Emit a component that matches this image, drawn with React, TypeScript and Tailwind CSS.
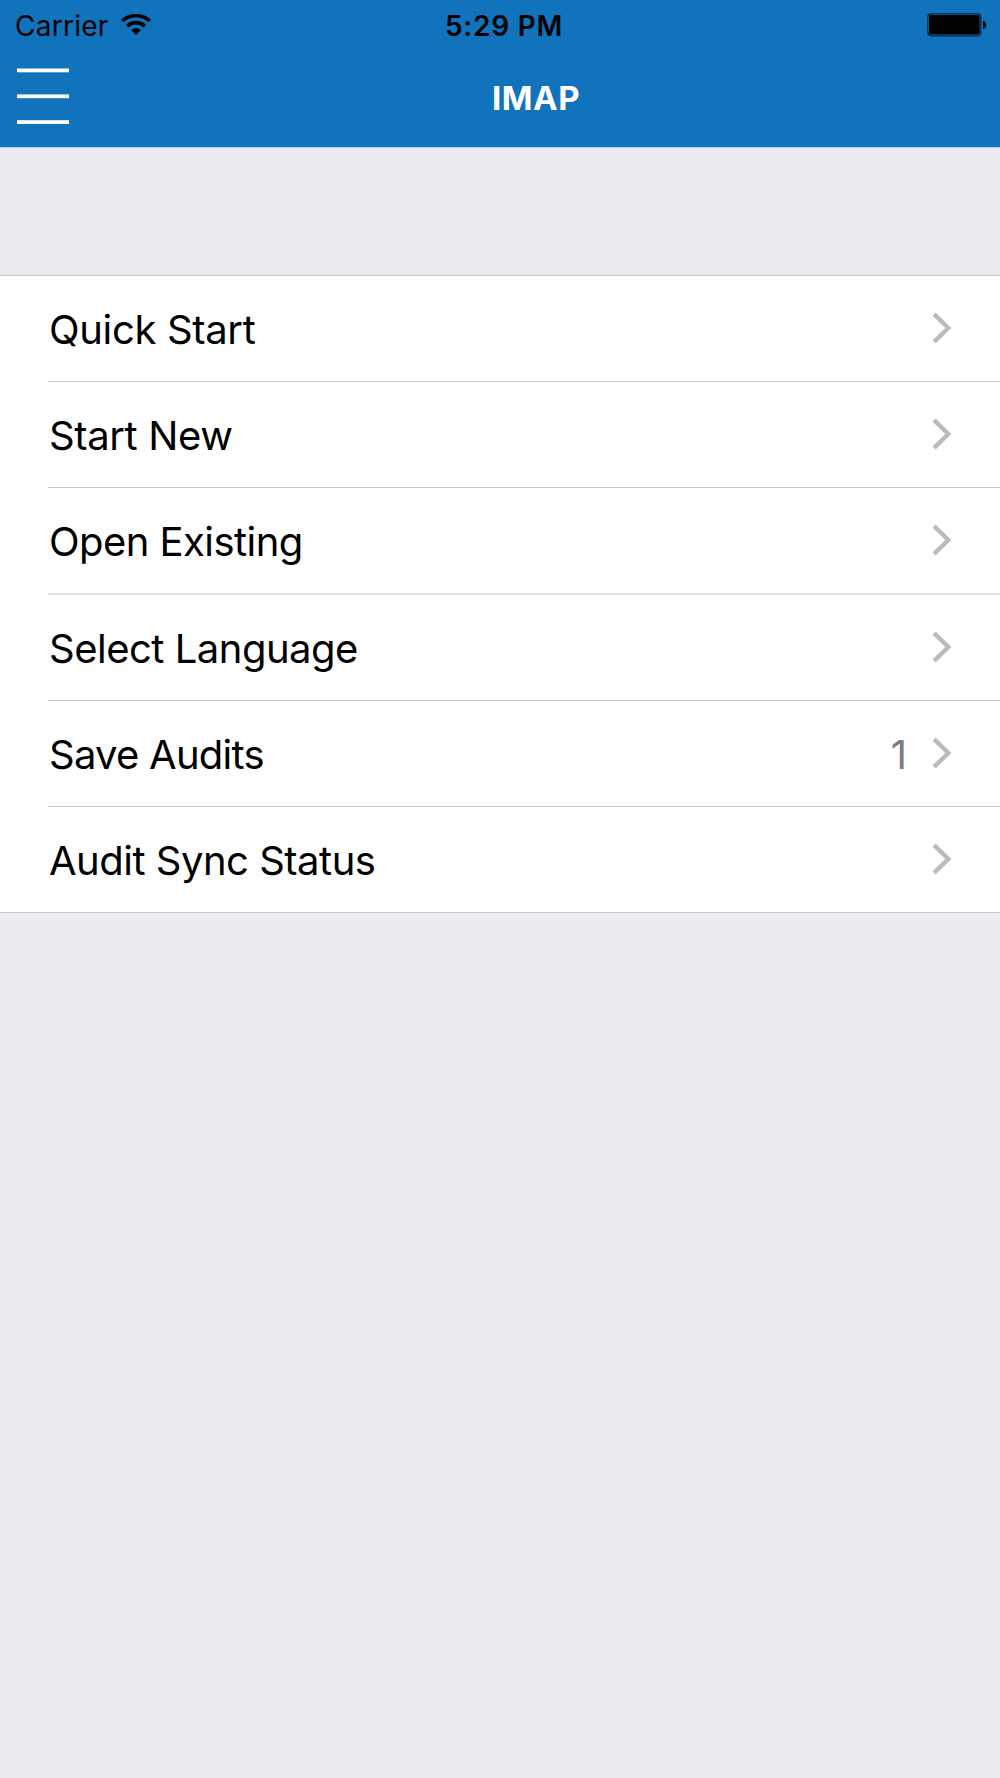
type Item = {
  label: string;
  tracking: string;
  row: string;
  divider: string;
  count?: number;
};

const items: Item[] = [
  { label: 'Quick Start', tracking: 'tracking-[-0.34px]', row: 'h-[106px]', divider: 'border-b border-[#c8c7cc]' },
  { label: 'Start New', tracking: 'tracking-[-0.37px]', row: 'h-[106px]', divider: 'border-b border-[#c8c7cc]' },
  { label: 'Open Existing', tracking: 'tracking-[-0.55px]', row: 'h-[107px]', divider: 'border-b-2 border-[#e2e1e5]' },
  { label: 'Select Language', tracking: 'tracking-[-0.5px]', row: 'h-[106px]', divider: 'border-b border-[#c8c7cc]' },
  { label: 'Save Audits', tracking: 'tracking-[-0.75px]', row: 'h-[106px]', divider: 'border-b border-[#c8c7cc]', count: 1 },
  { label: 'Audit Sync Status', tracking: 'tracking-[-0.5px]', row: 'h-[106px]', divider: 'border-b border-transparent' },
];

function WifiIcon() {
  return (
    <svg className="ml-3 h-[22px] w-[30px]" viewBox="0 0 30 22" fill="none" stroke="#000" strokeWidth="3.7">
      <path d="M1.2 7 C9 -.1 21 -.1 28.8 7" />
      <path d="M6.1 12.1 C11.2 7.4 18.8 7.4 23.9 12.1" />
      <path d="M10.1 16.1 C12.8 13.6 17.2 13.6 19.9 16.1 L15 21.1 Z" fill="#000" stroke="none" />
    </svg>
  );
}

function BatteryIcon() {
  return (
    <svg className="h-6 w-[60px]" viewBox="0 0 60 24">
      <rect x=".8" y=".8" width="53" height="22" rx="3.5" fill="none" stroke="#05263d" strokeWidth="1.2" />
      <rect x="2" y="2" width="50.6" height="19.6" rx="1.8" fill="#000" />
      <path d="M56 7.8 C60.2 8.4 60.2 15.4 56 16 Z" fill="#000" />
    </svg>
  );
}

function MenuIcon() {
  return (
    <svg className="h-14 w-[52px]" viewBox="0 0 52 56" fill="#fff">
      <rect y=".5" width="52" height="3.8" />
      <rect y="26.4" width="52" height="3.8" />
      <rect y="52.2" width="52" height="3.8" />
    </svg>
  );
}

function Chevron() {
  return (
    <svg className="mb-px h-8 w-5" viewBox="0 0 20 32" fill="none" stroke="#bbbac1" strokeWidth="4.4">
      <path d="M2.1 2.1 L16.3 16 L2.1 29.9" />
    </svg>
  );
}

export default function App() {
  return (
    <div className="flex h-[1778px] w-[1000px] flex-col overflow-hidden bg-[#ebebf1] font-[Inter,sans-serif] text-black">
      <header className="h-[148px] border-b border-[#b3cde6] bg-[#1073bc]">
        <div className="grid h-[50px] grid-cols-3 items-center pl-[15px] pr-[13px] text-[28px] leading-none">
          <div className="flex items-center tracking-[0.25px]">
            <span className="pt-px">Carrier</span>
            <WifiIcon />
          </div>
          <span className="pl-[6px] pt-px text-center font-semibold tracking-[0.75px]">5:29 PM</span>
          <div className="flex justify-end">
            <BatteryIcon />
          </div>
        </div>
        <div className="flex h-[97px] items-center pl-[17px] pb-[5px]">
          <MenuIcon />
          <h1 className="ml-[423px] pt-1 text-[33px] font-bold leading-none tracking-[0.5px] text-white">IMAP</h1>
        </div>
      </header>
      <ul className="mt-[127px] h-[638px] border-y border-[#c8c7cc] bg-white pl-12">
        {items.map((item) => (
          <li key={item.label} className={`flex items-center justify-between pl-px pr-12 text-[40px] leading-none ${item.row} ${item.divider}`}>
            <span className={`whitespace-nowrap pt-[2px] ${item.tracking}`}>{item.label}</span>
            <span className="flex items-center">
              {item.count !== undefined && <span className="mr-[25px] pt-[2px] text-[#7c7b81]">{item.count}</span>}
              <Chevron />
            </span>
          </li>
        ))}
      </ul>
    </div>
  );
}
